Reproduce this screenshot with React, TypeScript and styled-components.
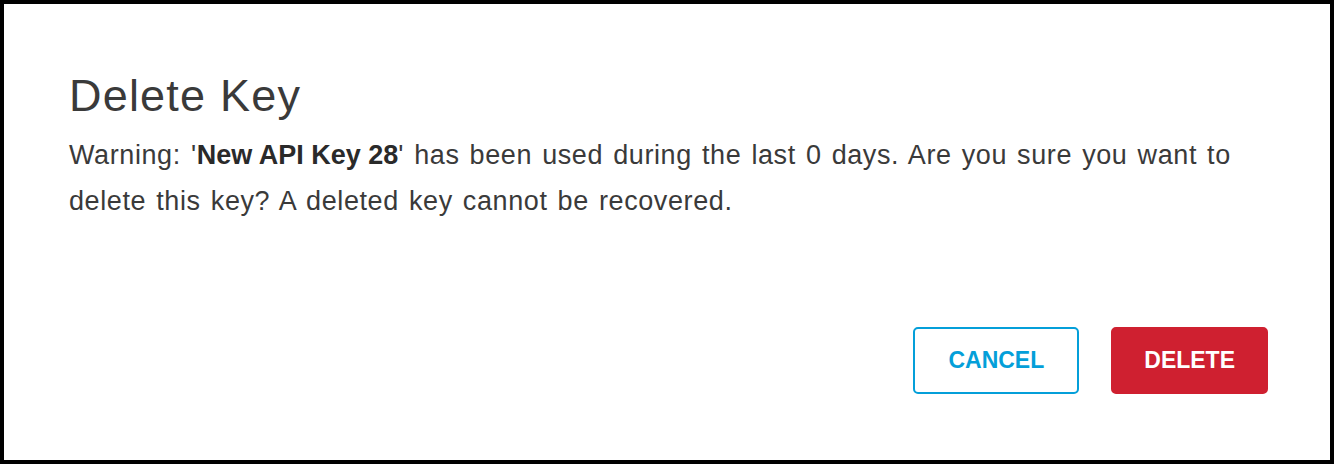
import styled, { createGlobalStyle } from "styled-components";

const GlobalStyle = createGlobalStyle`
  html, body {
    margin: 0;
    padding: 0;
    background: #ffffff;
  }
  * {
    box-sizing: border-box;
  }
`;

const Frame = styled.div`
  width: 1334px;
  height: 464px;
  border: 4px solid #000000;
  background: #ffffff;
  display: flex;
  flex-direction: column;
  padding: 66px 62px 66px 65px;
  font-family: "Liberation Sans", Arial, sans-serif;
  color: #3a3a3a;
`;

const Title = styled.h1`
  margin: 0;
  font-size: 45px;
  line-height: 52px;
  font-weight: 400;
  letter-spacing: 1.2px;
  color: #3a3a3a;
`;

const Message = styled.p`
  margin: 10px 0 0;
  font-size: 27px;
  line-height: 46px;
  letter-spacing: 0.6px;
  word-spacing: 2px;
  color: #3a3a3a;

  strong {
    font-weight: 700;
    letter-spacing: 0;
    word-spacing: 0;
    color: #2a2a2a;
  }
`;

const Actions = styled.div`
  margin-top: auto;
  display: flex;
  justify-content: flex-end;
  gap: 32px;
`;

const Button = styled.button<{ $variant: "ghost" | "danger" }>`
  height: 67px;
  padding: 0 ${({ $variant }) => ($variant === "danger" ? "31px" : "33px")};
  border-radius: 5px;
  font-family: "Liberation Sans", Arial, sans-serif;
  font-size: 23px;
  font-weight: 700;
  cursor: pointer;
  border: 2px solid
    ${({ $variant }) => ($variant === "danger" ? "#cf2030" : "#049fd9")};
  background: ${({ $variant }) => ($variant === "danger" ? "#cf2030" : "#ffffff")};
  color: ${({ $variant }) => ($variant === "danger" ? "#ffffff" : "#049fd9")};
`;

export default function App() {
  return (
    <>
      <GlobalStyle />
      <Frame>
        <Title>Delete Key</Title>
        <Message>
          Warning: '<strong>New API Key 28</strong>' has been used during the last 0 days. Are
          you sure you want to delete this key? A deleted key cannot be recovered.
        </Message>
        <Actions>
          <Button $variant="ghost">CANCEL</Button>
          <Button $variant="danger">DELETE</Button>
        </Actions>
      </Frame>
    </>
  );
}
